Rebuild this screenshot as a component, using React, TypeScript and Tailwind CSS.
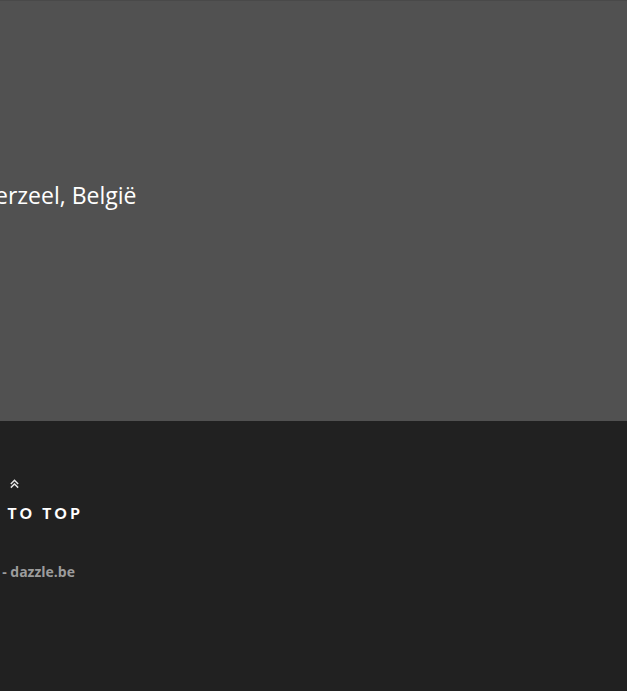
import React from "react";

function ChevronsUp() {
  return (
    <svg width="11" height="11" viewBox="0 0 12 12" fill="none">
      <path d="M2 6.5L6 2.5L10 6.5" stroke="#e6e6e6" strokeWidth="1.6" />
      <path d="M2 10.5L6 6.5L10 10.5" stroke="#e6e6e6" strokeWidth="1.6" />
    </svg>
  );
}

export default function App() {
  return (
    <div className="w-[627px] h-[691px] overflow-hidden bg-[#212121]" style={{ fontFamily: "'Open Sans', 'Liberation Sans', sans-serif" }}>
      <section className="h-[421px] bg-[#515151] border-t border-[#494949] flex items-center">
        <p className="-ml-[59px] -mt-[32px] whitespace-nowrap text-[23px] text-white">Londerzeel, België</p>
      </section>
      <footer className="pt-[57px]">
        <div className="-ml-[54px] w-fit flex flex-col items-center">
          <ChevronsUp />
          <a className="mt-[13px] text-[15px] font-black tracking-[3.6px] text-white whitespace-nowrap" style={{ fontFamily: "Lato, 'DejaVu Sans', sans-serif" }}>
            BACK TO TOP
          </a>
        </div>
        <p className="mt-[36px] -ml-[123px] whitespace-nowrap text-[14px] font-bold text-[#9c9c9c]">
          Privacy &amp; cookies - dazzle.be
        </p>
      </footer>
    </div>
  );
}
